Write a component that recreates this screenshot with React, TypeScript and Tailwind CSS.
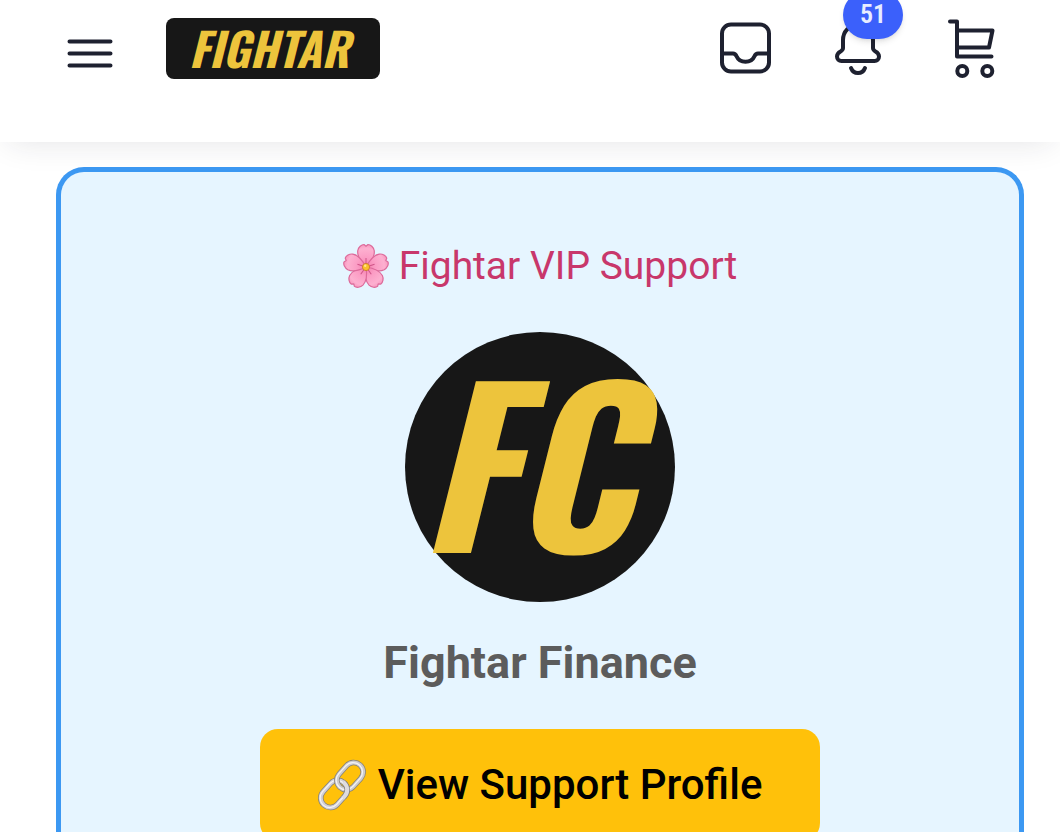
import type { ReactNode } from 'react';

interface HeaderButtonProps {
  label: string;
  children: ReactNode;
}

function HeaderButton({ label, children }: HeaderButtonProps) {
  return (
    <button aria-label={label} className="relative h-[61px] w-[52px] shrink-0 text-[#1e2130]">
      {children}
    </button>
  );
}

function IconSvg({ children }: { children: ReactNode }) {
  return (
    <svg
      viewBox="0 0 52 61"
      className="h-full w-full"
      fill="none"
      stroke="currentColor"
      strokeWidth="4"
      strokeLinecap="round"
      strokeLinejoin="round"
      aria-hidden="true"
    >
      {children}
    </svg>
  );
}

function Blossom() {
  return (
    <svg viewBox="0 0 46 46" className="size-[46px] shrink-0" aria-hidden="true">
      <defs>
        <radialGradient id="petal" cx="23" cy="24" r="23" gradientUnits="userSpaceOnUse">
          <stop offset="0" stopColor="#f47fae" />
          <stop offset="0.4" stopColor="#fb9cc4" />
          <stop offset="0.8" stopColor="#fdb0d0" />
          <stop offset="1" stopColor="#f795bd" />
        </radialGradient>
      </defs>
      {[0, 72, 144, 216, 288].map((angle) => (
        <g key={angle} transform={`rotate(${angle} 23 24)`}>
          <path
            d="M23 24C18 19 14 13 14.800 7.500C15.400 4 18.500 1.500 21 1.500L23 3.200L25 1.500C27.500 1.500 30.600 4 31.200 7.500C32 13 28 19 23 24Z"
            fill="url(#petal)"
            stroke="#dc6a9a"
            strokeWidth="1.200"
            strokeLinejoin="round"
          />
          <path d="M23 23V15" stroke="#cf5488" strokeWidth="1" fill="none" />
        </g>
      ))}
      <circle cx="23" cy="24" r="3.600" fill="#fbc02d" stroke="#c77a24" strokeWidth="0.8" />
      <circle cx="22.200" cy="22.800" r="1.200" fill="#ffe58a" />
    </svg>
  );
}

function ChainLink() {
  return (
    <svg viewBox="0 0 48 48" className="size-12 shrink-0 overflow-visible" fill="none" aria-hidden="true">
      <g transform="rotate(-48 24 25)">
        <rect x="-3" y="15.500" width="30" height="19" rx="9.500" stroke="#85817a" strokeWidth="5.500" />
        <rect x="-3" y="15.500" width="30" height="19" rx="9.500" stroke="#d3d0d6" strokeWidth="4" />
        <rect x="-3.500" y="15" width="30" height="19" rx="9.500" stroke="#f5f4f6" strokeWidth="1.200" />
        <rect x="21" y="15.500" width="30" height="19" rx="9.500" stroke="#85817a" strokeWidth="5.500" />
        <rect x="21" y="15.500" width="30" height="19" rx="9.500" stroke="#cfcdcd" strokeWidth="4" />
        <rect x="20.500" y="15" width="30" height="19" rx="9.500" stroke="#f5f4f6" strokeWidth="1.200" />
        <path d="M16 34.500h1.500a9.500 9.500 0 0 0 9.500-9.500" stroke="#85817a" strokeWidth="5.500" />
        <path d="M15 34.500h2.500a9.500 9.500 0 0 0 9.500-9.500v-1" stroke="#dedce0" strokeWidth="4" />
      </g>
    </svg>
  );
}

function Header() {
  return (
    <header className="relative flex items-start bg-white pt-[18px] pr-[63px] pb-[63px] pl-16 shadow-[0_8px_30px_-8px_rgba(30,33,48,0.12)]">
      <HeaderButton label="Menu">
        <IconSvg>
          <path d="M5.500 23.500h41M5.500 35.500h41M5.500 47.500h41" />
        </IconSvg>
      </HeaderButton>
      <a
        href="#"
        className="ml-[50px] flex h-[61px] w-[214px] items-center justify-center rounded-lg bg-[#171717] pr-2 pb-0.5 font-['Oswald','Roboto_Condensed','Liberation_Sans_Narrow',sans-serif] text-[46px] font-bold text-[#edc43c] italic"
      >
        FIGHTAR
      </a>
      <nav className="ml-auto flex gap-[61px]">
        <HeaderButton label="Inbox">
          <IconSvg>
            <rect x="3" y="6.500" width="47" height="47" rx="9" />
            <path d="M3 35.500h11c2 0 3 1.500 3.700 3c1.400 3.300 4.500 5.300 8.800 5.300s7.400-2 8.800-5.300c.7-1.500 1.700-3 3.700-3h11" />
          </IconSvg>
        </HeaderButton>
        <HeaderButton label="Notifications">
          <IconSvg>
            <path d="M26 7C17 7 11 13.500 11 22v8c0 1.800-1 2.600-2.500 3.500C6 34.800 5 36.300 5 38.500C5 41.300 7 43 9.500 43h33c2.500 0 4.500-1.700 4.500-4.500c0-2.200-1-3.700-3.500-5C42 32.600 41 31.800 41 30v-8C41 13.500 35 7 26 7z" />
            <path d="M19 50c1.200 3.200 3.700 5 7 5s5.800-1.800 7-5" />
          </IconSvg>
          <span className="absolute -top-[27px] left-[11px] flex h-12 w-[60px] items-center justify-center rounded-full bg-[#3b60fb] pb-0.5 font-['Roboto_Condensed','Roboto',sans-serif] text-[26px] leading-6 font-semibold text-[#e8edff] shadow-md">
            51
          </span>
        </HeaderButton>
        <HeaderButton label="Cart">
          <IconSvg>
            <path d="M5 3.500h7V38.500H46.500" />
            <path d="M12 12.500H47.500L44 29.500H12" />
            <circle cx="17.300" cy="53" r="5" />
            <circle cx="42.300" cy="53" r="5" />
          </IconSvg>
        </HeaderButton>
      </nav>
    </header>
  );
}

export default function App() {
  return (
    <div className="flex h-screen flex-col overflow-hidden bg-white font-['Roboto',sans-serif]">
      <Header />
      <main className="mt-[25px] mr-9 ml-14 flex shrink-0 flex-col items-center rounded-t-[28px] border-[5px] border-b-0 border-[#3c98f2] bg-[#e6f5ff] pt-[70px] pb-20">
        <p className="flex items-center gap-[10px] text-[39px] leading-12 text-[#c8376b]">
          <Blossom />
          Fightar VIP Support
        </p>
        <div className="mt-[42px] flex size-[270px] items-center justify-center rounded-full bg-[#171717] pr-7 pb-5 font-['Oswald','Roboto_Condensed','Liberation_Sans_Narrow',sans-serif] text-[212px] leading-none font-bold text-[#edc43c] italic">
          FC
        </div>
        <h1 className="mt-[31px] text-[45px] leading-[60px] font-bold text-[#5c5c5c]">Fightar Finance</h1>
        <button className="mt-9 flex h-28 items-center gap-3 rounded-[18px] bg-[#ffc10a] px-[58px] pb-0.5 text-[42px] font-medium text-black">
          <ChainLink />
          View Support Profile
        </button>
      </main>
    </div>
  );
}
